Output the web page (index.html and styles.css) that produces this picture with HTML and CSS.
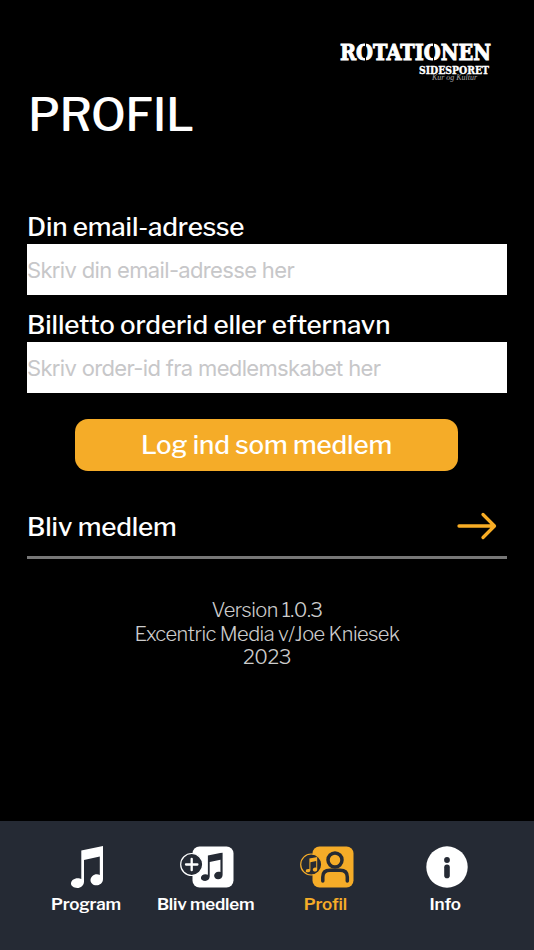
FILE: index.html
```html
<!DOCTYPE html>
<html lang="da">
<head>
<meta charset="utf-8">
<title>Profil</title>
<link rel="stylesheet" href="styles.css">
</head>
<body>
<svg class="defs" aria-hidden="true">
  <symbol id="note" viewBox="0 0 32 42">
    <path d="M10.300 4.400 32 0V33C32 37 28.800 39.300 25.300 39.300 22 39.300 19.500 37.200 19.500 34.300 19.500 31 22.500 28.300 25.800 28.300 27 28.300 28 28.500 28.800 28.900V10.600L13 14V35.500C13 39.500 9.800 42 6.300 42 2.700 42 0 40 0 37.600 0 34.600 3 32.200 6.700 32.200 8.200 32.200 9.500 32.500 10.300 32.900Z"/>
  </symbol>
</svg>
<div class="app">
  <header class="header">
    <svg class="logo" viewBox="0 0 152 42" role="img" aria-label="Rotationen Sidesporet">
      <text class="logo-main" x="0" y="18" textLength="151" lengthAdjust="spacingAndGlyphs">ROTATIONEN</text>
      <path class="stencil" d="M25.500 0v20M93.500 0v20"/>
      <text class="logo-sub" x="79" y="32" textLength="70" lengthAdjust="spacingAndGlyphs">SIDESPORET</text>
      <text class="logo-script" x="92" y="38" textLength="45" lengthAdjust="spacingAndGlyphs">Kur og Kultur</text>
    </svg>
    <h1 class="title">PROFIL</h1>
  </header>
  <main class="main">
    <form class="form">
      <label class="label label-email" for="email">Din email-adresse</label>
      <input class="input input-email" id="email" type="text" placeholder="Skriv din email-adresse her">
      <label class="label label-order" for="order">Billetto orderid eller efternavn</label>
      <input class="input input-order" id="order" type="text" placeholder="Skriv order-id fra medlemskabet her">
      <button class="login" type="button">Log ind som medlem</button>
    </form>
    <a class="join"><span>Bliv medlem</span>
      <svg class="arrow" viewBox="0 0 40 28"><path d="M2 14H37M26 2.500 37.500 14 26 25.500"/></svg>
    </a>
    <footer class="version">
      <div class="v1">Version 1.0.3</div>
      <div class="v2">Excentric Media v/Joe Kniesek</div>
      <div class="v3">2023</div>
    </footer>
  </main>
  <nav class="tabs">
    <a class="tab">
      <svg class="icon icon-note"><use href="#note"/></svg>
      <span class="t1">Program</span>
    </a>
    <a class="tab">
      <svg class="icon icon-wide" viewBox="0 0 54 42">
        <rect class="fill" x="12.500" y=".5" width="41" height="41" rx="7"/>
        <use class="dark" href="#note" x="20.500" y="6.500" width="22.500" height="28.500"/>
        <circle class="badge" cx="11.700" cy="18.500" r="11"/>
        <path class="plus" d="M11.700 12.800V24.200M6 18.500H17.400"/>
      </svg>
      <span class="t2">Bliv medlem</span>
    </a>
    <a class="tab active">
      <svg class="icon icon-wide" viewBox="0 0 54 42">
        <rect class="fill" x="12.500" y=".5" width="41" height="41" rx="7"/>
        <g class="person"><circle cx="35" cy="14" r="7"/><path d="M22.800 35V31Q22.800 24.300 30 24.300H40Q47.300 24.300 47.300 31V35"/></g>
        <circle class="badge" cx="11.200" cy="18.500" r="10.500"/>
        <use class="fill" href="#note" x="5.500" y="11" width="12" height="15.500"/>
      </svg>
      <span class="t3">Profil</span>
    </a>
    <a class="tab">
      <svg class="icon icon-info" viewBox="0 0 42 42">
        <circle class="fill" cx="21" cy="21" r="20.700"/>
        <circle class="dark" cx="21" cy="14" r="2.900"/>
        <rect class="dark" x="18.200" y="18.500" width="5.600" height="13.700" rx="2.800"/>
      </svg>
      <span class="t4">Info</span>
    </a>
  </nav>
</div>
</body>
</html>
```
FILE: styles.css
```css
* { box-sizing: border-box; }
body { margin: 0; background: #000; color: #fff; font-family: "Libre Franklin", Inter, sans-serif; }
.defs { position: absolute; width: 0; height: 0; }
.app { height: 950px; display: flex; flex-direction: column; overflow: hidden; }
.header { height: 210px; padding: 42px 27px 0; display: flex; flex-direction: column; }
.logo { width: 152px; height: 42px; align-self: flex-end; margin-right: 15px; overflow: visible; fill: #fff; }
.logo-main { font: bold 22.500px "DejaVu Serif", serif; stroke: #fff; stroke-width: 1px; }
.logo-sub { font: bold 11px "DejaVu Serif", serif; stroke: #fff; stroke-width: .4px; }
.logo-script { font: italic 8px "Liberation Serif", serif; fill: #aaa; }
.stencil { stroke: #000; stroke-width: 1; fill: none; }
.title { margin: 1px 0 0 1px; font-size: 46px; line-height: 60px; font-weight: 500; letter-spacing: -.65px; }
.main { flex: 1; padding: 0 27px; }
.form { display: flex; flex-direction: column; }
.label { height: 34px; line-height: 34px; font-size: 26px; font-weight: 500; letter-spacing: -.11px; white-space: nowrap; }
.label-order { margin-top: 13px; }
.input { height: 51px; width: 100%; border: 0; border-radius: 0; padding: 0; background: #fff; font: 22px Inter, sans-serif; letter-spacing: -.66px; color: #000; }
.input::placeholder { color: #c7c7c9; opacity: 1; }
.login { width: 383px; height: 52px; margin: 26px 0 0 48px; padding: 0 0 1px; border: 0; border-radius: 13px; background: #f5ac28; color: #fff; font: 500 26px "Libre Franklin", Inter, sans-serif; letter-spacing: -.11px; white-space: nowrap; }
.join { display: flex; align-items: center; justify-content: space-between; height: 63px; margin-top: 25px; padding-right: 10px; border-bottom: 3px solid #777; font-size: 26px; font-weight: 500; letter-spacing: -.11px; }
.arrow { width: 40px; height: 28px; fill: none; stroke: #f8ad25; stroke-width: 3.300; stroke-linecap: round; stroke-linejoin: round; }
.version { margin-top: 40px; text-align: center; font-size: 20px; line-height: 23.500px; font-weight: 300; letter-spacing: -.5px; color: #ccc; }
.tabs { height: 129px; padding: 25px 29px 0 26px; display: grid; grid-template-columns: repeat(4, 1fr); background: #252a34; }
.tab { display: flex; flex-direction: column; align-items: center; color: #fff; font-size: 17px; font-weight: 600; line-height: 25px; letter-spacing: -.2px; white-space: nowrap; }
.icon { height: 42px; margin-bottom: 4px; fill: currentColor; }
.icon-note { width: 32px; margin-left: 3px; }
.icon-wide { width: 54px; margin-left: 3px; }
.icon-info { width: 42px; margin-left: 4px; }
.fill { fill: currentColor; }
.dark { fill: #252a34; }
.badge { fill: #252a34; stroke: currentColor; stroke-width: 1.200; }
.plus { fill: none; stroke: currentColor; stroke-width: 2.300; stroke-linecap: round; }
.person { fill: none; stroke: #252a34; stroke-width: 3.500; stroke-linecap: round; }
.active { color: #f5ac28; }
```
